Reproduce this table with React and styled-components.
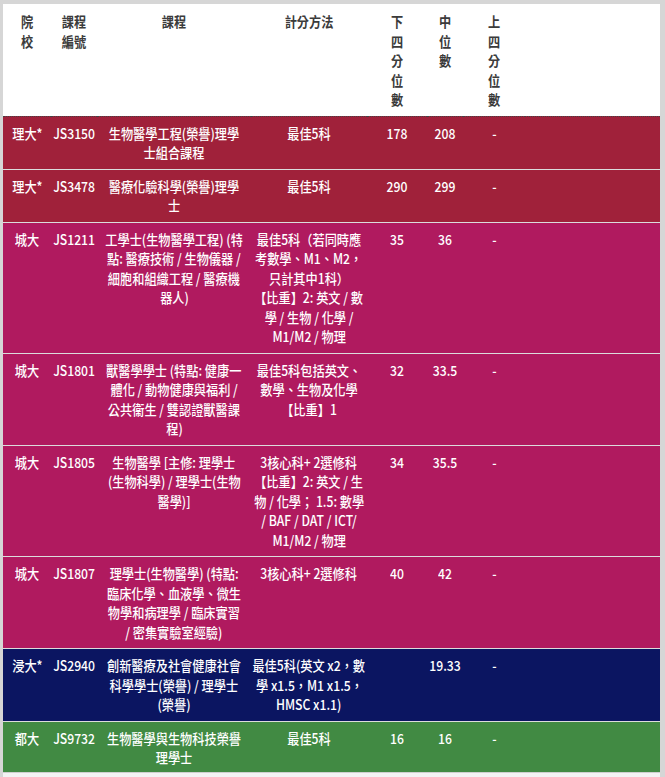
import React from "react";
import styled, { createGlobalStyle } from "styled-components";

const GlobalStyle = createGlobalStyle`
  html, body {
    margin: 0;
    padding: 0;
    background: #ffffff;
  }
  body {
    font-family: "Noto Sans CJK TC", "Noto Sans", sans-serif;
  }
`;

const tones = {
  red: "#a0213a",
  magenta: "#b01a5f",
  navy: "#0b1561",
  green: "#418a43",
};

const Frame = styled.div`
  height: 777px;
  display: flex;
  flex-direction: column;
  box-sizing: border-box;
  border-top: 4px solid #d6d6d6;
  border-left: 3px solid #d6d6d6;
  border-right: 5px solid #d6d6d6;
`;

const Scroller = styled.div`
  flex: 1;
  overflow: hidden;
`;

const ScrollTrack = styled.div`
  height: 4px;
  background: #f3f3f3;
  border-top: 1px solid #cfcfcf;
`;

const Table = styled.table`
  width: 657px;
  table-layout: fixed;
  border-collapse: collapse;
  font-size: 14px;
  line-height: 19.5px;
`;

const HeadRow = styled.tr`
  background: #ffffff;
  border-bottom: 1px dotted #444;
`;

const HeadCell = styled.th`
  padding: 8px 0 6px;
  vertical-align: top;
  font-weight: 700;
  color: #3b3b3b;
`;

const Row = styled.tr`
  background: ${(p) => tones[p.$tone]};
  border-top: 1px solid #dcdcdc;
  &:first-child {
    border-top: none;
  }
`;

const Cell = styled.td`
  padding: 7px 0 6px;
  vertical-align: top;
  color: #ffffff;
  font-weight: 500;
`;

const Stack = styled.div`
  display: flex;
  flex-direction: column;
  align-items: center;
`;

/* the source type is condensed */
const Line = styled.span`
  display: block;
  white-space: nowrap;
  transform: scaleX(0.87);
`;

const widths = [48, 46, 154, 116, 60, 36, 62, 135];

const rows = [
  {
    tone: "red",
    school: "理大*",
    code: "JS3150",
    course: ["生物醫學工程(榮譽)理學", "士組合課程"],
    method: ["最佳5科"],
    lq: "178",
    mid: "208",
    uq: "-",
  },
  {
    tone: "red",
    school: "理大*",
    code: "JS3478",
    course: ["醫療化驗科學(榮譽)理學", "士"],
    method: ["最佳5科"],
    lq: "290",
    mid: "299",
    uq: "-",
  },
  {
    tone: "magenta",
    school: "城大",
    code: "JS1211",
    course: [
      "工學士(生物醫學工程) (特",
      "點: 醫療技術 / 生物儀器 /",
      "細胞和組織工程 / 醫療機",
      "器人)",
    ],
    method: [
      "最佳5科（若同時應",
      "考數學、M1、M2，",
      "只計其中1科）",
      "【比重】2: 英文 / 數",
      "學 / 生物 / 化學 /",
      "M1/M2 / 物理",
    ],
    lq: "35",
    mid: "36",
    uq: "-",
  },
  {
    tone: "magenta",
    school: "城大",
    code: "JS1801",
    course: [
      "獸醫學學士 (特點: 健康一",
      "體化 / 動物健康與福利 /",
      "公共衞生 / 雙認證獸醫課",
      "程)",
    ],
    method: ["最佳5科包括英文、", "數學、生物及化學", "【比重】1"],
    lq: "32",
    mid: "33.5",
    uq: "-",
  },
  {
    tone: "magenta",
    school: "城大",
    code: "JS1805",
    course: ["生物醫學 [主修: 理學士", "(生物科學) / 理學士(生物", "醫學)]"],
    method: [
      "3核心科+ 2選修科",
      "【比重】2: 英文 / 生",
      "物 / 化學； 1.5: 數學",
      "/ BAF / DAT / ICT/",
      "M1/M2 / 物理",
    ],
    lq: "34",
    mid: "35.5",
    uq: "-",
  },
  {
    tone: "magenta",
    school: "城大",
    code: "JS1807",
    course: [
      "理學士(生物醫學) (特點:",
      "臨床化學、血液學、微生",
      "物學和病理學 / 臨床實習",
      "/ 密集實驗室經驗)",
    ],
    method: ["3核心科+ 2選修科"],
    lq: "40",
    mid: "42",
    uq: "-",
  },
  {
    tone: "navy",
    school: "浸大*",
    code: "JS2940",
    course: ["創新醫療及社會健康社會", "科學學士(榮譽) / 理學士", "(榮譽)"],
    method: ["最佳5科(英文 x2，數", "學 x1.5，M1 x1.5，", "HMSC x1.1)"],
    lq: "",
    mid: "19.33",
    uq: "-",
  },
  {
    tone: "green",
    school: "都大",
    code: "JS9732",
    course: ["生物醫學與生物科技榮譽", "理學士"],
    method: ["最佳5科"],
    lq: "16",
    mid: "16",
    uq: "-",
  },
];

const Lines = ({ items }) => (
  <Stack>
    {[].concat(items).map((line, i) => (
      <Line key={i}>{line}</Line>
    ))}
  </Stack>
);

const headers = [
  ["院", "校"],
  ["課程", "編號"],
  ["課程"],
  ["計分方法"],
  ["下", "四", "分", "位", "數"],
  ["中", "位", "數"],
  ["上", "四", "分", "位", "數"],
  [],
];

const App = () => {
  return (
    <>
      <GlobalStyle />
      <Frame>
        <Scroller>
          <Table>
            <colgroup>
              {widths.map((w, i) => (
                <col key={i} style={{ width: w }} />
              ))}
            </colgroup>
            <thead>
              <HeadRow>
                {headers.map((h, i) => (
                  <HeadCell key={i}>
                    <Lines items={h} />
                  </HeadCell>
                ))}
              </HeadRow>
            </thead>
            <tbody>
              {rows.map((r) => (
                <Row key={r.code} $tone={r.tone}>
                  <Cell>
                    <Lines items={r.school} />
                  </Cell>
                  <Cell>
                    <Lines items={r.code} />
                  </Cell>
                  <Cell>
                    <Lines items={r.course} />
                  </Cell>
                  <Cell>
                    <Lines items={r.method} />
                  </Cell>
                  <Cell>
                    <Lines items={r.lq} />
                  </Cell>
                  <Cell>
                    <Lines items={r.mid} />
                  </Cell>
                  <Cell>
                    <Lines items={r.uq} />
                  </Cell>
                  <Cell />
                </Row>
              ))}
            </tbody>
          </Table>
        </Scroller>
        <ScrollTrack />
      </Frame>
    </>
  );
};

export default App;
